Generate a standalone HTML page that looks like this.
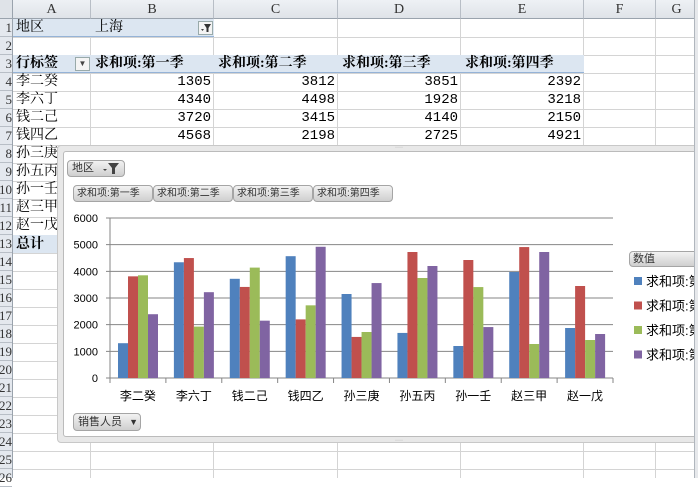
<!DOCTYPE html>
<html><head><meta charset="utf-8"><style>
*{margin:0;padding:0;box-sizing:border-box}
body{width:698px;height:478px;overflow:hidden;background:#fff;font-family:"Liberation Serif","Noto Serif CJK SC","WenQuanYi Zen Hei",serif;font-size:14px;position:relative}
.a{position:absolute}
.vl{position:absolute;top:0;width:1px;height:478px;background:#d4d4d4}
.hl{position:absolute;left:0;width:698px;height:1px;background:#d4d4d4}
.ch{position:absolute;top:0;height:19px;background:linear-gradient(#eef1f5,#dfe3e8);border-right:1px solid #b8bec6;border-bottom:1px solid #9aa3ad;text-align:center;line-height:19px;font-size:14px;color:#333}
.t{position:absolute;height:18px;line-height:18px;font-size:14px;white-space:nowrap;color:#000}
.n{text-align:right;font-family:"Liberation Mono",monospace;font-size:14px}
.btn{position:absolute;border:1px solid #a5a5a5;border-radius:4px;background:linear-gradient(#f2f2f2,#cfcfcf);font-family:"Liberation Sans","Noto Sans CJK SC",sans-serif;font-size:10px;color:#333;line-height:15px;white-space:nowrap;overflow:hidden}
</style></head><body>
<div id="grid"></div>
<div class="a" style="left:13px;top:19px;width:201px;height:18px;background:#dce6f1;border-bottom:1px solid #95b3d7"></div>
<div class="a" style="left:13px;top:55px;width:571px;height:18px;background:#dce6f1;border-bottom:1px solid #95b3d7"></div>
<div class="a" style="left:13px;top:235px;width:60px;height:18px;background:#dce6f1"></div>
<div class="t" style="left:16px;top:19px">地区</div>
<div class="t" style="left:95px;top:19px">上海</div>
<div class="a" style="left:198px;top:21px;width:15px;height:14px;border:1px solid #9aa;background:#f4f4f4;overflow:hidden">
<svg width="13" height="12" style="position:absolute;left:0;top:0"><path d="M2 7h3l-1.5 2z" fill="#444"/><path d="M5 2h7l-2.5 4v4h-2v-4z" fill="#333"/></svg></div>
<div class="t" style="left:16px;top:55px;font-weight:bold">行标签</div>
<div class="a" style="left:75px;top:57px;width:15px;height:14px;border:1px solid #9aa;background:#f4f4f4;font-size:8px;text-align:center;line-height:12px;color:#444">▼</div>
<div class="t" style="left:95px;top:55px;font-weight:bold">求和项:第一季</div>
<div class="t" style="left:218px;top:55px;font-weight:bold">求和项:第二季</div>
<div class="t" style="left:342px;top:55px;font-weight:bold">求和项:第三季</div>
<div class="t" style="left:465px;top:55px;font-weight:bold">求和项:第四季</div>
<div id="rows"></div>
<div class="t" style="left:16px;top:236px;font-weight:bold">总计</div>
<div class="a" style="left:57px;top:145px;width:650px;height:298px;background:#e8e8e8;border:1px solid #c8c8c8;border-radius:4px"></div>
<div class="a" style="left:63px;top:151px;width:640px;height:286px;background:#fff;border:1px solid #bbb;border-radius:3px"></div>
<div class="a" style="left:395px;top:145px;font-size:6px;color:#999;line-height:6px">····</div>
<div class="a" style="left:395px;top:438px;font-size:6px;color:#999;line-height:6px">····</div>
<div class="btn" style="left:67px;top:160px;width:58px;height:17px;padding-left:4px;font-size:11px">地区
<svg width="20" height="13" style="position:absolute;left:34px;top:1px"><path d="M1 7h4l-2 2z" fill="#444"/><path d="M6 1h11l-4 5v6h-3v-6z" fill="#444"/></svg></div>
<div class="btn" style="left:73px;top:185px;width:80px;height:17px;padding-left:3px">求和项:第一季</div>
<div class="btn" style="left:153px;top:185px;width:80px;height:17px;padding-left:3px">求和项:第二季</div>
<div class="btn" style="left:233px;top:185px;width:80px;height:17px;padding-left:3px">求和项:第三季</div>
<div class="btn" style="left:313px;top:185px;width:80px;height:17px;padding-left:3px">求和项:第四季</div>
<div class="btn" style="left:73px;top:413px;width:68px;height:18px;padding-left:4px;font-size:11px;line-height:16px">销售人员 <span style="font-size:9px;margin-left:4px">▼</span></div>
<div class="btn" style="left:629px;top:251px;width:69px;height:16px;padding-left:3px;font-size:11px;line-height:14px">数值</div>
<div id="chart"></div>
<div class="a" style="left:694px;top:0;width:4px;height:478px;background:#e6e8eb;border-left:1px solid #b0b6bd"></div>
<script>
var g='';
var cols=[13,91,214,338,461,584,656];
for(var i=0;i<cols.length;i++)g+='<div class="vl" style="left:'+(cols[i]-1)+'px"></div>';
for(var y=37;y<478;y+=18)g+='<div class="hl" style="top:'+y+'px"></div>';
g+='<div class="a" style="left:0;top:0;width:13px;height:478px;background:#e4e8ee;border-right:1px solid #9aa3ad"></div>';
var L=['A','B','C','D','E','F','G'],cw=[78,123,124,123,123,72,42];
for(i=0;i<7;i++)g+='<div class="ch" style="left:'+cols[i]+'px;width:'+cw[i]+'px">'+L[i]+'</div>';
g+='<div class="a" style="left:0;top:0;width:13px;height:19px;background:#dfe3e8;border-right:1px solid #9aa3ad;border-bottom:1px solid #9aa3ad"></div>';
for(var r=1;r<=26;r++){var t=19+18*(r-1);g+='<div class="a" style="left:0;top:'+t+'px;width:12px;height:18px;border-bottom:1px solid #b8bec6;font-size:13px;line-height:18px;text-align:right;color:#333;overflow:hidden;direction:rtl">'+r+'</div>';}
document.getElementById('grid').innerHTML=g;
var names=['李二癸','李六丁','钱二己','钱四乙','孙三庚','孙五丙','孙一壬','赵三甲','赵一戊'];
var d=[[1305,3812,3851,2392],[4340,4498,1928,3218],[3720,3415,4140,2150],[4568,2198,2725,4921],[3150,1540,1725,3560],[1690,4725,3750,4200],[1200,4425,3410,1910],[3975,4910,1275,4725],[1875,3450,1425,1650]];
var h='';
for(i=0;i<9;i++){var t=73+18*i;h+='<div class="t" style="left:16px;top:'+t+'px">'+names[i]+'</div>';
if(i<4){var rx=[214,338,461,584];for(var j=0;j<4;j++)h+='<div class="t n" style="left:'+(rx[j]-80)+'px;width:77px;top:'+t+'px">'+d[i][j]+'</div>';}}
document.getElementById('rows').innerHTML=h;
var s='<svg class="a" style="left:0;top:0" width="698" height="478" font-family="Liberation Sans, Noto Sans CJK SC, sans-serif">';
var x0=110,x1=613,y0=378,k=160/6000,gw=(x1-x0)/9;
for(var v=0;v<=6000;v+=1000){var yy=y0-v*k;s+='<line x1="'+(x0-4)+'" x2="'+x1+'" y1="'+yy+'" y2="'+yy+'" stroke="#868686"/>';s+='<text x="98" y="'+(yy+4)+'" font-size="11" text-anchor="end" fill="#000">'+v+'</text>';}
s+='<line x1="'+x0+'" x2="'+x0+'" y1="218" y2="383" stroke="#868686"/>';
var c=['#4f81bd','#c0504d','#9bbb59','#8064a2'];
for(i=0;i<9;i++){var gx=x0+gw*i;s+='<line x1="'+(gx+gw)+'" x2="'+(gx+gw)+'" y1="378" y2="383" stroke="#868686"/>';
for(j=0;j<4;j++){var hh=d[i][j]*k;s+='<rect x="'+(gx+8+j*10)+'" y="'+(y0-hh)+'" width="10" height="'+hh+'" fill="'+c[j]+'"/>';}
s+='<text x="'+(gx+gw/2)+'" y="400" font-size="12" text-anchor="middle">'+names[i]+'</text>';}
for(j=0;j<4;j++){var ly=281+24.5*j;s+='<rect x="634" y="'+(ly-4)+'" width="8" height="8" fill="'+c[j]+'"/><text x="646" y="'+(ly+5)+'" font-size="13">求和项:第</text>';}
s+='</svg>';
document.getElementById('chart').innerHTML=s;
</script>
</body></html>
